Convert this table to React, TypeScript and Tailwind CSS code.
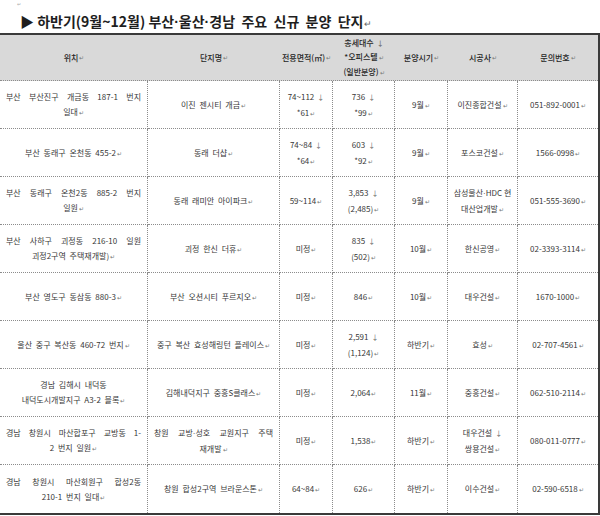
import React from 'react';

interface Row {
  location: string;
  name: string;
  area: string;
  units: string;
  period: string;
  builder: string;
  phone: string;
}

// "\n" = line break inside a cell, "^" at line start = justified line, "↓" = forced break mark
const rows: Row[] = [
  {
    location: '^부산 부산진구 개금동 187-1 번지\n일대',
    name: '이진 젠시티 개금',
    area: '74~112 ↓\n*61',
    units: '736 ↓\n*99',
    period: '9월',
    builder: '이진종합건설',
    phone: '051-892-0001',
  },
  {
    location: '부산 동래구 온천동 455-2',
    name: '동래 더샵',
    area: '74~84 ↓\n*64',
    units: '603 ↓\n*92',
    period: '9월',
    builder: '포스코건설',
    phone: '1566-0998',
  },
  {
    location: '^부산 동래구 온천2동 885-2 번지\n일원',
    name: '동래 래미안 아이파크',
    area: '59~114',
    units: '3,853 ↓\n(2,485)',
    period: '9월',
    builder: '삼성물산·HDC 현\n대산업개발',
    phone: '051-555-3690',
  },
  {
    location: '^부산 사하구 괴정동 216-10 일원\n괴정2구역 주택재개발)',
    name: '괴정 한신 더휴',
    area: '미정',
    units: '835 ↓\n(502)',
    period: '10월',
    builder: '한신공영',
    phone: '02-3393-3114',
  },
  {
    location: '부산 영도구 동삼동 880-3',
    name: '부산 오션시티 푸르지오',
    area: '미정',
    units: '846',
    period: '10월',
    builder: '대우건설',
    phone: '1670-1000',
  },
  {
    location: '울산 중구 복산동 460-72 번지',
    name: '중구 복산 효성해링턴 플레이스',
    area: '미정',
    units: '2,591 ↓\n(1,124)',
    period: '하반기',
    builder: '효성',
    phone: '02-707-4561',
  },
  {
    location: '경남 김해시 내덕동\n내덕도시개발지구 A3-2 블록',
    name: '김해내덕지구 중흥S클래스',
    area: '미정',
    units: '2,064',
    period: '11월',
    builder: '중흥건설',
    phone: '062-510-2114',
  },
  {
    location: '^경남 창원시 마산합포구 교방동 1-\n2 번지 일원',
    name: '^창원 교방·성호 교원지구 주택\n재개발',
    area: '미정',
    units: '1,538',
    period: '하반기',
    builder: '대우건설 ↓\n쌍용건설',
    phone: '080-011-0777',
  },
  {
    location: '^경남 창원시 마산회원구 합성2동\n210-1 번지 일대',
    name: '창원 합성2구역 브라운스톤',
    area: '64~84',
    units: '626',
    period: '하반기',
    builder: '이수건설',
    phone: '02-590-6518',
  },
];

const cols = 'grid grid-cols-[148px_132px_53px_62px_53px_70px_80px]';

function Mark({ c }: { c: string }) {
  return <span className="text-[6px] text-[#777] ml-px">{c}</span>;
}

// narrow middle dot, as in the document
function Dotted({ s }: { s: string }) {
  const parts = s.split('·');
  return (
    <>
      {parts.map((p, i) => (
        <React.Fragment key={i}>
          {i > 0 && <span className="font-['Liberation_Sans',sans-serif]">·</span>}
          {p}
        </React.Fragment>
      ))}
    </>
  );
}

function CellText({ text }: { text: string }) {
  const lines = text.split('\n');
  return (
    <div className="w-full">
      {lines.map((raw, i) => {
        const justify = raw.startsWith('^');
        let line = justify ? raw.slice(1) : raw;
        const hardBreak = line.endsWith('↓');
        if (hardBreak) line = line.slice(0, -1).trimEnd();
        const last = i === lines.length - 1;
        return (
          <div
            key={i}
            className={
              justify
                ? 'text-justify [text-align-last:justify] leading-[15px] whitespace-nowrap'
                : 'text-center leading-[15px] whitespace-nowrap'
            }
          >
            <Dotted s={line} />
            {hardBreak && <span className="text-[7px] text-[#666] ml-[3px]">↓</span>}
            {last && <Mark c="↵" />}
          </div>
        );
      })}
    </div>
  );
}

function Cell({ text, last, bottom, wide }: { text: string; last?: boolean; bottom?: boolean; wide?: boolean }) {
  return (
    <div
      className={`flex items-center justify-center border-dotted border-[#8c8c8c] ${
        wide ? 'px-[6px] [word-spacing:2px]' : 'px-[3px]'
      } ${last ? '' : 'border-r'} ${bottom ? '' : 'border-b'}`}
    >
      <CellText text={text} />
    </div>
  );
}

export default function App() {
  return (
    <div className="w-[600px] h-[516px] bg-white overflow-hidden font-['Noto_Sans_CJK_KR','Noto_Sans',sans-serif] text-[#383838]">
      <div className="h-[7px] pl-[17px] text-[5px] leading-[7px] text-[#aaa]">↵</div>
      <div className="h-[26px] pl-[20px] pt-[5px] text-[14px] leading-[18px] font-bold text-[#1e1e1e] whitespace-nowrap">
        ▶ 하반기(9월~12월) <Dotted s="부산·울산·경남" /> &nbsp;주요 &nbsp;신규 &nbsp;분양 &nbsp;단지
        <span className="text-[9px] font-normal text-[#666]">↵</span>
      </div>

      <div className="w-[600px] border-t-2 border-b-2 border-r-2 border-[#3a3a3a]">
        {/* header */}
        <div className={`${cols} h-[46px] bg-[#d9d9d9] border-b border-dotted border-[#8c8c8c] text-[8px] font-medium text-[#262626]`}>
          <div className="flex items-center justify-center">위치<Mark c="↵" /></div>
          <div className="flex items-center justify-center">단지명<Mark c="↵" /></div>
          <div className="flex items-center justify-center whitespace-nowrap">전용면적(㎡)<Mark c="↵" /></div>
          <div className="flex flex-col items-center justify-center leading-[14px]">
            <div>총세대수<span className="text-[7px] text-[#666] ml-[3px]">↓</span></div>
            <div>*오피스텔<Mark c="↵" /></div>
            <div>(일반분양)<Mark c="↵" /></div>
          </div>
          <div className="flex items-center justify-center">분양시기<Mark c="↵" /></div>
          <div className="flex items-center justify-center">시공사<Mark c="↵" /></div>
          <div className="flex items-center justify-center">문의번호<Mark c="↵" /></div>
        </div>

        {/* body */}
        {rows.map((r, i) => {
          const bottom = i === rows.length - 1;
          return (
            <div key={i} className={`${cols} h-[48px] text-[8px]`}>
              <Cell text={r.location} bottom={bottom} wide />
              <Cell text={r.name} bottom={bottom} wide />
              <Cell text={r.area} bottom={bottom} />
              <Cell text={r.units} bottom={bottom} />
              <Cell text={r.period} bottom={bottom} />
              <Cell text={r.builder} bottom={bottom} />
              <Cell text={r.phone} bottom={bottom} last />
            </div>
          );
        })}
      </div>
    </div>
  );
}
